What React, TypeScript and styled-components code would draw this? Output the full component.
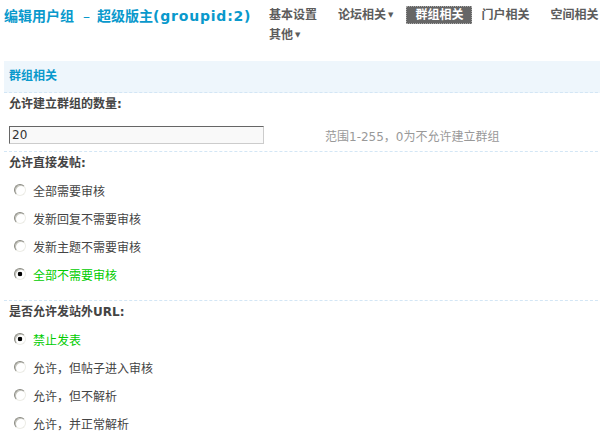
import { useState } from "react";
import styled, { createGlobalStyle } from "styled-components";

const GlobalStyle = createGlobalStyle`
  html, body {
    margin: 0;
    padding: 0;
    overflow: hidden;
    background: #fff;
  }
  body {
    font-family: "DejaVu Sans", "Noto Sans CJK SC", sans-serif;
    font-size: 12px;
    color: #444;
  }
`;

const Page = styled.div`
  width: 624px;
  padding: 0 4px;
`;

const Header = styled.div`
  display: flex;
  align-items: flex-start;
`;

const Title = styled.h3`
  flex: 0 0 258px;
  margin: 6px 0 0;
  font-size: 14px;
  line-height: 20px;
  font-weight: bold;
  color: #0999cc;
  white-space: nowrap;
`;

const TitleDash = styled.span`
  margin: 0 7px 0 9px;
  font-weight: normal;
`;

const TitleId = styled.span`
  letter-spacing: 0.8px;
`;

const Nav = styled.ul`
  display: flex;
  flex-wrap: wrap;
  width: 370px;
  margin: 5px 0 0;
  padding: 0;
  list-style: none;
`;

const NavItem = styled.li<{ $active?: boolean }>`
  height: 20px;
  margin-right: 7px;
  padding: 0 7px;
  box-sizing: border-box;
  font-weight: bold;
  line-height: 20px;
  white-space: nowrap;
  color: ${(p) => (p.$active ? "#fff" : "#5c5c5c")};
  ${(p) =>
    p.$active &&
    `
    height: 18px;
    margin: 1px 2px 0 -1px;
    padding: 0 8px;
    line-height: 16px;
    background: #666;
    border: 1px dotted #aaa;
  `}
`;

const Arrow = styled.span`
  margin-left: 2px;
  font-size: 7px;
  vertical-align: 2px;
`;

const SectionBar = styled.div`
  margin-top: 16px;
  height: 31px;
  padding-left: 5px;
  line-height: 31px;
  background: #eef6fc;
  border-bottom: 1px dashed #d3e6f5;
  font-weight: bold;
  color: #0999cc;
`;

const Label = styled.div`
  height: 23px;
  padding-left: 5px;
  line-height: 23px;
  font-weight: bold;
  color: #444;
`;

const InputRow = styled.div`
  display: grid;
  grid-template-columns: 316px 1fr;
  align-items: center;
  padding: 10px 5px 7px;
  border-bottom: 1px dashed #d3e6f5;
`;

const TextInput = styled.input`
  width: 255px;
  height: 18px;
  box-sizing: border-box;
  padding: 0 2px;
  border: 1px solid;
  border-color: #666 #ccc #ccc #666;
  background: #f9f9f9;
  font: 12px "DejaVu Sans", sans-serif;
  color: #333;
  outline: none;
`;

const Hint = styled.span`
  color: #999;
`;

const RadioList = styled.div`
  padding: 1px 0 12px;
  border-bottom: 1px dashed #d3e6f5;
`;

const RadioItem = styled.label<{ $on: boolean }>`
  display: flex;
  align-items: center;
  height: 28px;
  padding-left: 10px;
  color: ${(p) => (p.$on ? "#00cc00" : "#444")};
  cursor: pointer;
`;

const Radio = styled.input`
  appearance: none;
  width: 12px;
  height: 12px;
  margin: 0 7px 0 0;
  border: 1px solid;
  border-color: #8a8a82 #ecece6 #ecece6 #8a8a82;
  border-radius: 50%;
  background: #fff;
  box-shadow: inset 1px 1px 0 #c4c4bc;

  &:checked {
    background: radial-gradient(circle, #000 0 2px, #fff 2.6px);
  }
`;

type Group = { name: string; title: string; options: string[] };

const groups: Group[] = [
  {
    name: "allowpost",
    title: "允许直接发帖:",
    options: ["全部需要审核", "发新回复不需要审核", "发新主题不需要审核", "全部不需要审核"],
  },
  {
    name: "allowurl",
    title: "是否允许发站外URL:",
    options: ["禁止发表", "允许，但帖子进入审核", "允许，但不解析", "允许，并正常解析"],
  },
];

const navItems = [
  { text: "基本设置" },
  { text: "论坛相关", menu: true },
  { text: "群组相关", active: true },
  { text: "门户相关" },
  { text: "空间相关" },
  { text: "其他", menu: true },
];

const RadioGroup = ({ group, initial }: { group: Group; initial: number }) => {
  const [value, setValue] = useState(initial);
  return (
    <>
      <Label>{group.title}</Label>
      <RadioList>
        {group.options.map((opt, i) => (
          <RadioItem key={opt} $on={value === i}>
            <Radio
              type="radio"
              name={group.name}
              checked={value === i}
              onChange={() => setValue(i)}
            />
            {opt}
          </RadioItem>
        ))}
      </RadioList>
    </>
  );
};

const App = () => {
  const [count, setCount] = useState("20");
  return (
    <Page>
      <GlobalStyle />
      <Header>
        <Title>
          编辑用户组<TitleDash>–</TitleDash>超级版主<TitleId>(groupid:2)</TitleId>
        </Title>
        <Nav>
          {navItems.map((item) => (
            <NavItem key={item.text} $active={item.active}>
              {item.text}
              {item.menu && <Arrow>▼</Arrow>}
            </NavItem>
          ))}
        </Nav>
      </Header>

      <SectionBar>群组相关</SectionBar>

      <Label>允许建立群组的数量:</Label>
      <InputRow>
        <TextInput value={count} onChange={(e) => setCount(e.target.value)} />
        <Hint>范围1-255，0为不允许建立群组</Hint>
      </InputRow>

      <RadioGroup group={groups[0]} initial={3} />
      <RadioGroup group={groups[1]} initial={0} />
    </Page>
  );
};

export default App;
